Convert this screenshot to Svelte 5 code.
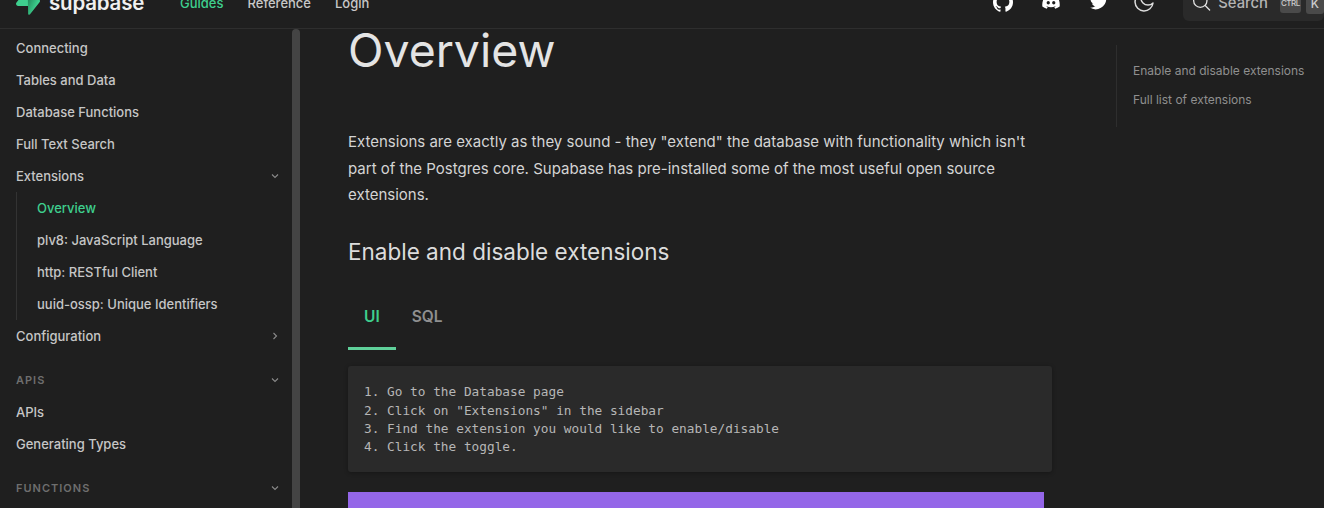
<script>
  const top = ['Connecting', 'Tables and Data', 'Database Functions', 'Full Text Search'];
  const sub = ['plv8: JavaScript Language', 'http: RESTful Client', 'uuid-ossp: Unique Identifiers'];
  const steps = [
    '1. Go to the Database page',
    '2. Click on "Extensions" in the sidebar',
    '3. Find the extension you would like to enable/disable',
    '4. Click the toggle.'
  ];
</script>

<div class="page">
  <header class="bar">
    <div class="bar-inner">
      <svg class="logo" viewBox="0 0 109 113" width="24" height="25">
        <defs>
          <linearGradient id="lg" x1="53" y1="55" x2="94" y2="72" gradientUnits="userSpaceOnUse">
            <stop offset="0" stop-color="#249361"/><stop offset="1" stop-color="#3ecf8e"/>
          </linearGradient>
        </defs>
        <path fill="url(#lg)" d="M63.7 110.3C60.8 113.9 55 111.9 55 107.3L54 40.100H99.200C107.400 40.100 112 49.500 106.900 55.900L63.700 110.300Z"/>
        <path fill="#3ecf8e" d="M45.300 2.100C48.200-1.500 54 .4 54 5L54.500 72.300H9.800C1.600 72.300-2.900 62.800 2.200 56.400L45.300 2.100Z"/>
      </svg>
      <span class="word">supabase</span>
      <nav class="links">
        <a class="on">Guides</a>
        <a>Reference</a>
        <a>Login</a>
      </nav>
      <div class="icons">
        <svg viewBox="0 0 24 24" width="20" height="20"><path fill="#fff" d="M12 .297c-6.630 0-12 5.373-12 12 0 5.303 3.438 9.800 8.205 11.385.6.113.82-.258.82-.577 0-.285-.01-1.040-.015-2.040-3.338.724-4.042-1.610-4.042-1.610C4.422 18.070 3.633 17.700 3.633 17.700c-1.087-.744.084-.729.084-.729 1.205.084 1.838 1.236 1.838 1.236 1.070 1.835 2.809 1.305 3.495.998.108-.776.417-1.305.76-1.605-2.665-.3-5.466-1.332-5.466-5.930 0-1.310.465-2.380 1.235-3.220-.135-.303-.54-1.523.105-3.176 0 0 1.005-.322 3.300 1.230.96-.267 1.980-.399 3-.405 1.020.006 2.040.138 3 .405 2.280-1.552 3.285-1.230 3.285-1.230.645 1.653.24 2.873.12 3.176.765.84 1.230 1.910 1.230 3.220 0 4.610-2.805 5.625-5.475 5.920.42.36.81 1.096.81 2.220 0 1.606-.015 2.896-.015 3.286 0 .315.21.69.825.57C20.565 22.092 24 17.592 24 12.297c0-6.627-5.373-12-12-12"/></svg>
        <svg viewBox="0 0 24 24" width="20" height="20"><path fill="#fff" d="M19.300 5.300A17 17 0 0 0 15 4l-.5 1.100a16 16 0 0 0-5 0L9 4a17 17 0 0 0-4.300 1.300C2 9.400 1.200 13.400 1.600 17.300A17 17 0 0 0 6.900 20l1.100-1.800c-.6-.2-1.200-.5-1.700-.8l.4-.3a12 12 0 0 0 10.600 0l.4.300c-.5.300-1.100.6-1.700.8l1.100 1.800a17 17 0 0 0 5.300-2.700c.5-4.500-.8-8.500-2.700-12zM8.700 14.900c-1 0-1.900-1-1.900-2.100s.8-2.100 1.900-2.100 1.900 1 1.900 2.100-.8 2.100-1.900 2.100zm6.600 0c-1 0-1.900-1-1.900-2.100s.8-2.100 1.900-2.100 1.900 1 1.900 2.100-.8 2.100-1.900 2.100z"/></svg>
        <svg viewBox="0 0 24 24" width="20" height="20"><path fill="#fff" d="M23 5c-.8.400-1.700.600-2.600.700.900-.600 1.600-1.400 2-2.500-.900.500-1.900.900-2.900 1.100a4.500 4.500 0 0 0-7.700 4.100C8 8.200 4.700 6.400 2.500 3.700c-1.200 2.100-.600 4.700 1.400 6-.700 0-1.400-.200-2-.600 0 2.200 1.500 4.100 3.600 4.500-.700.200-1.400.200-2 .100.600 1.800 2.200 3.100 4.200 3.100A9 9 0 0 1 1 18.700 12.800 12.800 0 0 0 20.700 7.300c.900-.600 1.700-1.400 2.300-2.300z"/></svg>
        <svg class="moon" viewBox="0 0 24 24" width="24" height="24"><path fill="none" stroke="#ddd" stroke-width="1.500" stroke-linecap="round" stroke-linejoin="round" d="M21 13A9 9 0 1 1 11 3a7 7 0 0 0 10 10z"/></svg>
      </div>
      <div class="search">
        <svg viewBox="0 0 24 24" width="24" height="24"><circle cx="10.500" cy="10.500" r="7.500" fill="none" stroke="#e0e0e0" stroke-width="1.500"/><path d="M16 16l5 5" stroke="#e0e0e0" stroke-width="1.500" stroke-linecap="round"/></svg>
        <span class="search-label">Search</span>
        <kbd class="ctrl">CTRL</kbd>
        <kbd>K</kbd>
      </div>
    </div>
  </header>

  <div class="body">
    <aside class="side">
      <ul class="menu">
        {#each top as t}<li>{t}</li>{/each}
        <li class="row">Extensions
          <svg class="chev" viewBox="0 0 10 10"><path d="M2 3.500l3 3 3-3"/></svg>
        </li>
      </ul>
      <ul class="menu subs">
        <li class="active">Overview</li>
        {#each sub as s}<li>{s}</li>{/each}
      </ul>
      <ul class="menu">
        <li class="row">Configuration
          <svg class="chev" viewBox="0 0 10 10"><path d="M3.500 2l3 3-3 3"/></svg>
        </li>
      </ul>
      <div class="group row">APIS<svg class="chev" viewBox="0 0 10 10"><path d="M2 3.500l3 3 3-3"/></svg></div>
      <ul class="menu">
        <li>APIs</li>
        <li>Generating Types</li>
      </ul>
      <div class="group row">FUNCTIONS<svg class="chev" viewBox="0 0 10 10"><path d="M2 3.500l3 3 3-3"/></svg></div>
    </aside>
    <div class="track"><div class="thumb"></div></div>

    <main class="main">
      <h1>Overview</h1>
      <p class="lead">Extensions are exactly as they sound - they "extend" the database with functionality which isn't part of the Postgres core. Supabase has pre-installed some of the most useful open source extensions.</p>
      <h2>Enable and disable extensions</h2>
      <div class="tabs">
        <div class="tab on">UI</div>
        <div class="tab">SQL</div>
      </div>
      <pre class="code">{steps.join('\n')}</pre>
      <div class="purple"></div>
    </main>

    <aside class="toc">
      <a>Enable and disable extensions</a>
      <a>Full list of extensions</a>
    </aside>
  </div>
</div>

<style>
  :global(body) { margin: 0; background: #1f1f1f; overflow: hidden; }
  .page { width: 1324px; height: 508px; overflow: hidden; background: #1f1f1f; color: #d4d4d4; font-family: "Inter", "Liberation Sans", sans-serif; }
  .bar { height: 28px; border-bottom: 1px solid #2e2e2e; overflow: hidden; }
  .bar-inner { height: 52px; margin-top: -24px; padding-left: 16px; display: flex; align-items: center; }
  .logo { flex: none; }
  .word { font-size: 20.500px; font-weight: 600; color: #f0f0f0; margin-left: 9px; width: 131px; letter-spacing: -.2px; }
  .links { display: flex; gap: 24px; font-size: 13px; font-weight: 500; color: #c8c8c8; padding-top: 2px; }
  .on { color: #3ecf8e; }
  .icons { display: flex; gap: 28px; margin-left: auto; align-items: center; }
  .moon { margin-left: -5px; }
  .search { width: 133px; margin-left: 27px; height: 38px; display: flex; align-items: center; background: #2a2a2a; border-radius: 6px; padding-left: 8px; gap: 2px; flex: none; font-size: 14.800px; font-weight: 500; color: #b4b4b4; }
  .search-label { margin-right: 7px; margin-left: 4px; padding-top: 2px; }
  kbd { background: #4a4a4a; border-radius: 3px; font: 500 12px "Inter", sans-serif; color: #ccc; padding: 3px 5px; margin-top: 2px; margin-left: 3px; }
  .ctrl { font-size: 8px; padding: 5px 1px; letter-spacing: -.5px; }
  .body { display: flex; height: 479px; }
  .side { width: 292px; flex: none; padding: 3px 0 0 16px; box-sizing: border-box; }
  .track { width: 8px; flex: none; }
  .thumb { height: 100%; background: #444; border-radius: 4px 4px 0 0; }
  .menu { list-style: none; margin: 0; padding: 0; font-size: 13px; font-weight: 500; color: #c6c6c6; }
  .menu li { height: 32px; line-height: 32px; }
  .row { display: flex; align-items: center; justify-content: space-between; padding-right: 12px; }
  .chev { width: 10px; height: 10px; fill: none; stroke: #8a8a8a; stroke-width: 1.100; }
  .subs { border-left: 1px solid #333; padding-left: 20px; }
  .active { color: #3ecf8e; }
  .group { height: 32px; margin-top: 12px; font-size: 11px; font-weight: 600; letter-spacing: 1px; color: #6e6e6e; }
  .main { width: 696px; flex: none; margin-left: 48px; }
  h1 { margin: 0; font-size: 46.400px; line-height: 42px; font-weight: 400; color: #e4e4e4; }
  .lead { margin: 58.400px 0 0; width: 690px; font-size: 15px; line-height: 26.400px; color: #d4d4d4; }
  h2 { margin: 27.600px 0 0; font-size: 22.500px; line-height: 32px; font-weight: 400; color: #dcdcdc; }
  .tabs { display: flex; margin-top: 17px; font-size: 15.500px; font-weight: 600; }
  .tab { padding: 0 16px; height: 65px; line-height: 64px; color: #8f8f8f; box-sizing: border-box; }
  .tab.on { color: #3ecf8e; border-bottom: 3px solid #5fd09a; }
  .code { margin: 16px -8px 0 0; background: #2a2a2a; border-radius: 3px; padding: 17px 16px 15px; height: 74px; font: 12.780px/18.300px "DejaVu Sans Mono", monospace; color: #b6b6b6; box-shadow: 0 1px 4px rgba(0,0,0,.3); }
  .purple { height: 60px; margin-top: 20px; background: #9466e8; }
  .toc { margin-left: 72px; margin-top: 16px; height: 82px; box-sizing: border-box; border-left: 1px solid #2e2e2e; padding: 18px 0 0 16px; display: flex; flex-direction: column; gap: 14px; font-size: 12px; color: #8f8f8f; white-space: nowrap; }
</style>
